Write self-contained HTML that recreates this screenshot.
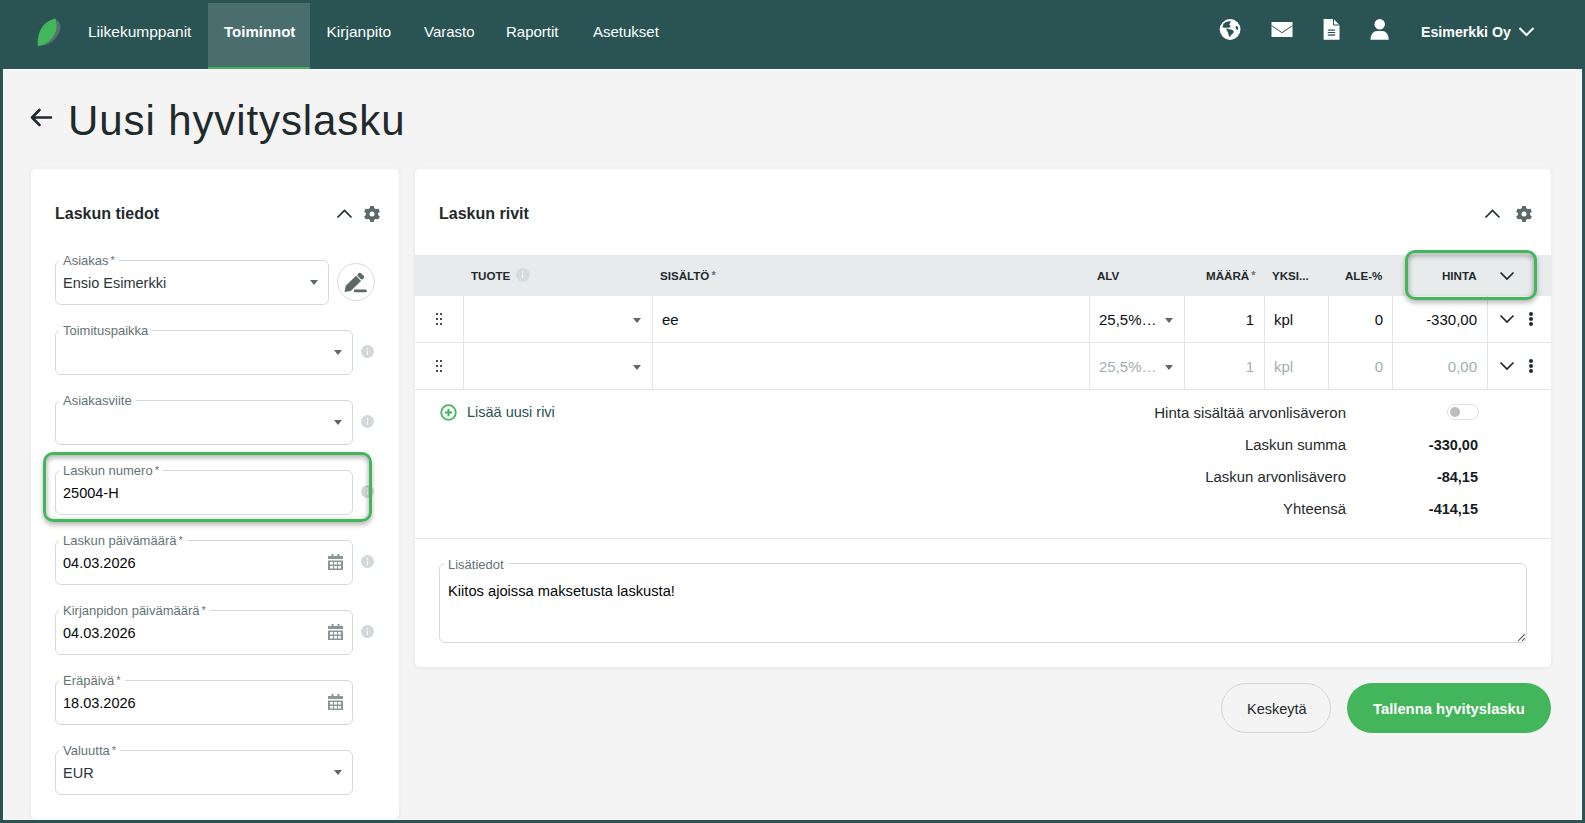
<!DOCTYPE html>
<html><head><meta charset="utf-8">
<style>
*{box-sizing:border-box;margin:0;padding:0}
html,body{width:1585px;height:823px;overflow:hidden}
body{background:#2a5353;font-family:"Liberation Sans",sans-serif;position:relative;color:#1f2a2c}
.a{position:absolute}
.t{position:absolute;white-space:nowrap;line-height:1}
#main{position:absolute;left:3px;top:69px;width:1579px;height:751px;background:#f3f4f3;border:1px solid #fff;border-right:1px solid #fff}
.nav{color:#fff;font-size:15px}
.tab{position:absolute;left:208px;top:3px;width:102px;height:66px;background:#4a6e6e;border-bottom:2px solid #3fb356}
.card{position:absolute;background:#fff;border-radius:5px;box-shadow:0 1px 4px rgba(40,80,100,.08)}
.fld{position:absolute;border:1px solid #d3dada;border-radius:6px;background:#fff}
.lbl{position:absolute;font-size:13px;color:#637376;background:#fff;padding:0 4px;line-height:1;white-space:nowrap}
.val{position:absolute;font-size:14.5px;color:#050808;line-height:1;white-space:nowrap}
.dd{position:absolute;width:0;height:0;border-left:4px solid transparent;border-right:4px solid transparent;border-top:5px solid #5d6868}
.info{position:absolute;width:13px;height:13px;border-radius:50%;background:#d3d9da}
.info:after{content:"";position:absolute;left:5.75px;top:5.5px;width:1.5px;height:4px;background:rgba(255,255,255,.85)}
.info:before{content:"";position:absolute;left:5.75px;top:3px;width:1.5px;height:1.5px;background:rgba(255,255,255,.85)}
.th{position:absolute;font-size:11.6px;font-weight:bold;color:#1f2a2c;line-height:1;white-space:nowrap;top:270.3px}
.vl{position:absolute;width:1px;background:#e2e6e6}
.hl{position:absolute;height:1px;background:#e2e6e6}
.cell{position:absolute;font-size:15px;line-height:1;white-space:nowrap;color:#0b1012}
.g{color:#a3aeb0}
.star{margin-left:2px;font-size:11px;position:relative;top:-1px}
.hlbox{position:absolute;border:3px solid #43b55a;border-radius:10px;box-shadow:inset 0 2px 5px 1px rgba(0,0,0,.28),0 3px 5px rgba(0,0,0,.28)}

</style></head>
<body>
<!-- NAV -->
<svg class="a" style="left:34px;top:16px" width="30" height="34" viewBox="0 0 30 34">
  <path d="M22.5 3.5 C27 6 27.5 13 24 19 C20.5 25 14 29 6.5 30.2 C14 26 23 18 22.5 3.5Z" fill="#56706f"/>
  <path d="M21.5 2.5 C11 5 3 13 3.8 30.2 C12 29.5 22 22 22.6 11 C22.8 7.5 22.3 4.5 21.5 2.5Z" fill="#43b55a"/>
</svg>
<div class="tab"></div>
<div class="t nav" style="left:88px;top:24px;font-size:15.5px">Liikekumppanit</div>
<div class="t nav" style="left:224px;top:24px;font-weight:bold">Toiminnot</div>
<div class="t nav" style="left:326.5px;top:24px;font-size:15.5px">Kirjanpito</div>
<div class="t nav" style="left:424px;top:24px">Varasto</div>
<div class="t nav" style="left:506px;top:24px">Raportit</div>
<div class="t nav" style="left:593px;top:24px">Asetukset</div>

<div class="t nav" style="left:1421px;top:24.5px;font-weight:bold;font-size:14.2px">Esimerkki Oy</div>


<!-- nav icons -->
<svg class="a" style="left:1219px;top:18px" width="23" height="23" viewBox="0 0 23 23">
 <circle cx="11.1" cy="11.5" r="10.4" fill="#fff"/>
 <path d="M3.84 9.03 L4.39 6.48 L6.21 4.47 L8.76 3.74 L11.68 3.56 L10.58 5.39 L10.04 6.66 L11.31 7.94 L10.95 9.03 L8.76 9.58 L5.11 9.58 Z" fill="#2a5353" stroke="#2a5353" stroke-width="0.5" stroke-linejoin="round"/>
 <path d="M7.67 10.85 L10.58 11.4 L13.5 12.31 L14.59 13.4 L13.86 15.23 L12.04 16.69 L10.95 18.87 L10.04 17.42 L9.12 14.13 L7.67 11.58 Z" fill="#2a5353" stroke="#2a5353" stroke-width="0.5" stroke-linejoin="round"/>
 <ellipse cx="17.9" cy="9.9" rx="1.1" ry="2.1" transform="rotate(-20 17.9 9.9)" fill="#2a5353"/>
</svg>
<svg class="a" style="left:1271px;top:21px" width="22" height="17" viewBox="0 0 22 17">
 <rect x="0.5" y="1" width="21" height="15" fill="#fff"/>
 <path d="M0.5 4.6 L11 11.7 L21.5 4.6" fill="none" stroke="#2a5353" stroke-width="1"/>
</svg>
<svg class="a" style="left:1323px;top:18px" width="17" height="22" viewBox="0 0 17 22">
 <path d="M0.6 1 H10.5 L16.5 7 V21.7 H0.6 Z" fill="#fff"/>
 <path d="M10.5 1 V7 H16.5" fill="none" stroke="#2a5353" stroke-width="1"/>
 <rect x="4.8" y="11.5" width="7.4" height="1.2" fill="#2a5353"/>
 <rect x="4.8" y="14" width="7.4" height="1.1" fill="#2a5353"/>
 <rect x="4.8" y="16.4" width="7.4" height="1.3" fill="#2a5353"/>
</svg>
<svg class="a" style="left:1370px;top:18px" width="20" height="22" viewBox="0 0 20 22">
 <circle cx="9.7" cy="6.3" r="5.2" fill="#fff"/>
 <path d="M0.5 21.8 C0.5 16 3.8 12.9 6.8 12.9 H12.4 C15.4 12.9 18.7 16 18.7 21.8 Z" fill="#fff"/>
</svg>
<svg class="a" style="left:1518px;top:26px" width="17" height="11" viewBox="0 0 17 11">
 <path d="M1.5 2 L8.5 9 L15.5 2" fill="none" stroke="#fff" stroke-width="2"/>
</svg>

<div id="main"></div>

<!-- TITLE -->
<svg class="a" style="left:29px;top:107px" width="24" height="21" viewBox="0 0 24 21">
  <path d="M22 10.5H3M10.5 3L3 10.5L10.5 18" fill="none" stroke="#1f2a2c" stroke-width="2.6" stroke-linecap="round" stroke-linejoin="round"/>
</svg>
<div class="t" style="left:68px;top:100px;font-size:42px;letter-spacing:0.9px;color:#1f2a2c">Uusi hyvityslasku</div>

<!-- LEFT CARD -->
<div class="card" style="left:31px;top:169px;width:368px;height:650px"></div>
<div class="t" style="left:55px;top:206px;font-size:16px;font-weight:bold;color:#1f2a2c">Laskun tiedot</div>

<div class="fld" style="left:55px;top:260px;width:274px;height:45px"></div>
<div class="lbl" style="left:59px;top:254px">Asiakas<span class="star">*</span></div>
<div class="val" style="left:63px;top:276px;color:#2d3436">Ensio Esimerkki</div>
<div class="dd" style="left:310px;top:280px"></div>
<div class="fld" style="left:55px;top:330px;width:298px;height:45px"></div>
<div class="lbl" style="left:59px;top:324px">Toimituspaikka</div>
<div class="dd" style="left:334px;top:350px"></div>
<div class="info" style="left:361px;top:345px"></div>
<div class="fld" style="left:55px;top:400px;width:298px;height:45px"></div>
<div class="lbl" style="left:59px;top:394px">Asiakasviite</div>
<div class="dd" style="left:334px;top:420px"></div>
<div class="info" style="left:361px;top:415px"></div>
<div class="fld" style="left:55px;top:470px;width:298px;height:45px"></div>
<div class="lbl" style="left:59px;top:464px">Laskun numero<span class="star">*</span></div>
<div class="val" style="left:63px;top:486px">25004-H</div>
<div class="info" style="left:361px;top:485px"></div>
<div class="fld" style="left:55px;top:540px;width:298px;height:45px"></div>
<div class="lbl" style="left:59px;top:534px">Laskun päivämäärä<span class="star">*</span></div>
<div class="val" style="left:63px;top:556px">04.03.2026</div>
<svg class="a" style="left:328px;top:554px" width="15" height="16" viewBox="0 0 15 16"><rect x="3.5" y="0" width="2" height="3" fill="#8c9696"/><rect x="9.5" y="0" width="2" height="3" fill="#8c9696"/><rect x="0" y="2" width="15" height="3" fill="#8c9696"/><path fill-rule="evenodd" fill="#8c9696" d="M0 6.5H15V16H0Z M2 8h3v2.5H2Z M6 8h3v2.5H6Z M10 8h3v2.5h-3Z M2 12h3v2.5H2Z M6 12h3v2.5H6Z M10 12h3v2.5h-3Z"/></svg>
<div class="info" style="left:361px;top:555px"></div>
<div class="fld" style="left:55px;top:610px;width:298px;height:45px"></div>
<div class="lbl" style="left:59px;top:604px">Kirjanpidon päivämäärä<span class="star">*</span></div>
<div class="val" style="left:63px;top:626px">04.03.2026</div>
<svg class="a" style="left:328px;top:624px" width="15" height="16" viewBox="0 0 15 16"><rect x="3.5" y="0" width="2" height="3" fill="#8c9696"/><rect x="9.5" y="0" width="2" height="3" fill="#8c9696"/><rect x="0" y="2" width="15" height="3" fill="#8c9696"/><path fill-rule="evenodd" fill="#8c9696" d="M0 6.5H15V16H0Z M2 8h3v2.5H2Z M6 8h3v2.5H6Z M10 8h3v2.5h-3Z M2 12h3v2.5H2Z M6 12h3v2.5H6Z M10 12h3v2.5h-3Z"/></svg>
<div class="info" style="left:361px;top:625px"></div>
<div class="fld" style="left:55px;top:680px;width:298px;height:45px"></div>
<div class="lbl" style="left:59px;top:674px">Eräpäivä<span class="star">*</span></div>
<div class="val" style="left:63px;top:696px">18.03.2026</div>
<svg class="a" style="left:328px;top:694px" width="15" height="16" viewBox="0 0 15 16"><rect x="3.5" y="0" width="2" height="3" fill="#8c9696"/><rect x="9.5" y="0" width="2" height="3" fill="#8c9696"/><rect x="0" y="2" width="15" height="3" fill="#8c9696"/><path fill-rule="evenodd" fill="#8c9696" d="M0 6.5H15V16H0Z M2 8h3v2.5H2Z M6 8h3v2.5H6Z M10 8h3v2.5h-3Z M2 12h3v2.5H2Z M6 12h3v2.5H6Z M10 12h3v2.5h-3Z"/></svg>
<div class="fld" style="left:55px;top:750px;width:298px;height:45px"></div>
<div class="lbl" style="left:59px;top:744px">Valuutta<span class="star">*</span></div>
<div class="val" style="left:63px;top:766px;color:#2d3436">EUR</div>
<div class="dd" style="left:334px;top:770px"></div>

<!-- left header icons -->
<svg class="a" style="left:336px;top:208px" width="17" height="11" viewBox="0 0 17 11"><path d="M1.5 9.5L8.5 2.5L15.5 9.5" fill="none" stroke="#1f2a2c" stroke-width="1.6"/></svg>
<svg class="a" style="left:363.5px;top:206px" width="16" height="16" viewBox="0 0 16 16" overflow="visible"><path fill="#5d6868" d="M1.7999999999999998,8 a6.2,6.2 0 1,0 12.4,0 a6.2,6.2 0 1,0 -12.4,0Z M10.40,3.00 L9.75,-0.10 L6.25,-0.10 L5.60,3.00Z M4.87,3.42 L1.86,2.43 L0.11,5.47 L2.47,7.58Z M2.47,8.42 L0.11,10.53 L1.86,13.57 L4.87,12.58Z M5.60,13.00 L6.25,16.10 L9.75,16.10 L10.40,13.00Z M11.13,12.58 L14.14,13.57 L15.89,10.53 L13.53,8.42Z M13.53,7.58 L15.89,5.47 L14.14,2.43 L11.13,3.42Z"/><circle cx="8" cy="8" r="2.5" fill="#fff"/></svg>
<!-- pen button -->
<div class="a" style="left:337px;top:263px;width:38px;height:38px;border-radius:50%;border:1px solid #d6dcdc;background:#fff"></div>
<svg class="a" style="left:344px;top:271px" width="24" height="22" viewBox="0 0 24 22"><path d="M0.8 20.8 L2.1 14.4 L12.1 5.0 L16.8 10.05 L6.8 19.7 Z" fill="#5d6868" stroke="#5d6868" stroke-width="0.4" stroke-linejoin="round"/><rect x="13.1" y="2.9" width="7.4" height="4.4" rx="2" transform="rotate(45 16.8 5.1)" fill="#5d6868"/><rect x="9.8" y="18.6" width="13" height="2.6" rx="1.3" fill="#5d6868"/></svg>
<!-- highlight around laskun numero -->
<div class="hlbox" style="left:43px;top:452px;width:329px;height:70px"></div>

<!-- RIGHT CARD -->
<div class="card" style="left:415px;top:169px;width:1136px;height:498px"></div>
<div class="t" style="left:439px;top:206px;font-size:16px;font-weight:bold;color:#1f2a2c">Laskun rivit</div>

<svg class="a" style="left:1484px;top:208px" width="17" height="11" viewBox="0 0 17 11"><path d="M1.5 9.5L8.5 2.5L15.5 9.5" fill="none" stroke="#1f2a2c" stroke-width="1.6"/></svg>
<svg class="a" style="left:1515.5px;top:206px" width="16" height="16" viewBox="0 0 16 16" overflow="visible"><path fill="#5d6868" d="M1.7999999999999998,8 a6.2,6.2 0 1,0 12.4,0 a6.2,6.2 0 1,0 -12.4,0Z M10.40,3.00 L9.75,-0.10 L6.25,-0.10 L5.60,3.00Z M4.87,3.42 L1.86,2.43 L0.11,5.47 L2.47,7.58Z M2.47,8.42 L0.11,10.53 L1.86,13.57 L4.87,12.58Z M5.60,13.00 L6.25,16.10 L9.75,16.10 L10.40,13.00Z M11.13,12.58 L14.14,13.57 L15.89,10.53 L13.53,8.42Z M13.53,7.58 L15.89,5.47 L14.14,2.43 L11.13,3.42Z"/><circle cx="8" cy="8" r="2.5" fill="#fff"/></svg>
<div class="a" style="left:415px;top:255px;width:1136px;height:41px;background:#e8ebec"></div>
<div class="th" style="left:471px">TUOTE</div>
<div class="info" style="left:516px;top:268px;width:14px;height:14px;background:#d6dcdd"></div>
<div class="th" style="left:660px">SISÄLTÖ<span class="star" style="color:#637376">*</span></div>
<div class="th" style="left:1097px">ALV</div>
<div class="th" style="left:1206px">MÄÄRÄ<span class="star" style="color:#637376">*</span></div>
<div class="th" style="left:1272px">YKSI...</div>
<div class="th" style="left:1345px">ALE-%</div>
<div class="th" style="left:1442px">HINTA</div>
<svg class="a" style="left:1499px;top:271px" width="16" height="10" viewBox="0 0 16 10"><path d="M1.5 1.5L8 8L14.5 1.5" fill="none" stroke="#1f2a2c" stroke-width="1.7"/></svg>
<div class="hl" style="left:415px;top:342px;width:1136px"></div>
<div class="vl" style="left:463px;top:296px;height:46px"></div>
<div class="vl" style="left:652px;top:296px;height:46px"></div>
<div class="vl" style="left:1089px;top:296px;height:46px"></div>
<div class="vl" style="left:1184px;top:296px;height:46px"></div>
<div class="vl" style="left:1264px;top:296px;height:46px"></div>
<div class="vl" style="left:1328px;top:296px;height:46px"></div>
<div class="vl" style="left:1392px;top:296px;height:46px"></div>
<div class="vl" style="left:1487px;top:296px;height:46px"></div>
<div class="a" style="left:436px;top:313px;width:2px;height:2px;background:#404b4b"></div>
<div class="a" style="left:436px;top:318px;width:2px;height:2px;background:#404b4b"></div>
<div class="a" style="left:436px;top:323px;width:2px;height:2px;background:#404b4b"></div>
<div class="a" style="left:440px;top:313px;width:2px;height:2px;background:#404b4b"></div>
<div class="a" style="left:440px;top:318px;width:2px;height:2px;background:#404b4b"></div>
<div class="a" style="left:440px;top:323px;width:2px;height:2px;background:#404b4b"></div>
<div class="dd" style="left:633px;top:318px"></div>
<div class="cell" style="left:662px;top:312px">ee</div>
<div class="cell" style="left:1099px;top:312px">25,5%…</div>
<div class="dd" style="left:1165px;top:318px"></div>
<div class="cell" style="right:331px;top:312px">1</div>
<div class="cell" style="left:1274px;top:312px">kpl</div>
<div class="cell" style="right:202px;top:312px">0</div>
<div class="cell" style="right:108px;top:312px">-330,00</div>
<svg class="a" style="left:1499px;top:314px" width="16" height="10" viewBox="0 0 16 10"><path d="M1.5 1.5L8 8L14.5 1.5" fill="none" stroke="#1f2a2c" stroke-width="1.7"/></svg>
<div class="a" style="left:1528.5px;top:312px;width:4px;height:4px;border-radius:50%;background:#1f2a2c"></div>
<div class="a" style="left:1528.5px;top:317px;width:4px;height:4px;border-radius:50%;background:#1f2a2c"></div>
<div class="a" style="left:1528.5px;top:322px;width:4px;height:4px;border-radius:50%;background:#1f2a2c"></div>
<div class="hl" style="left:415px;top:389px;width:1136px"></div>
<div class="vl" style="left:463px;top:343px;height:46px"></div>
<div class="vl" style="left:652px;top:343px;height:46px"></div>
<div class="vl" style="left:1089px;top:343px;height:46px"></div>
<div class="vl" style="left:1184px;top:343px;height:46px"></div>
<div class="vl" style="left:1264px;top:343px;height:46px"></div>
<div class="vl" style="left:1328px;top:343px;height:46px"></div>
<div class="vl" style="left:1392px;top:343px;height:46px"></div>
<div class="vl" style="left:1487px;top:343px;height:46px"></div>
<div class="a" style="left:436px;top:360px;width:2px;height:2px;background:#404b4b"></div>
<div class="a" style="left:436px;top:365px;width:2px;height:2px;background:#404b4b"></div>
<div class="a" style="left:436px;top:370px;width:2px;height:2px;background:#404b4b"></div>
<div class="a" style="left:440px;top:360px;width:2px;height:2px;background:#404b4b"></div>
<div class="a" style="left:440px;top:365px;width:2px;height:2px;background:#404b4b"></div>
<div class="a" style="left:440px;top:370px;width:2px;height:2px;background:#404b4b"></div>
<div class="dd" style="left:633px;top:365px"></div>
<div class="cell g" style="left:1099px;top:359px">25,5%…</div>
<div class="dd" style="left:1165px;top:365px"></div>
<div class="cell g" style="right:331px;top:359px">1</div>
<div class="cell g" style="left:1274px;top:359px">kpl</div>
<div class="cell g" style="right:202px;top:359px">0</div>
<div class="cell g" style="right:108px;top:359px">0,00</div>
<svg class="a" style="left:1499px;top:361px" width="16" height="10" viewBox="0 0 16 10"><path d="M1.5 1.5L8 8L14.5 1.5" fill="none" stroke="#1f2a2c" stroke-width="1.7"/></svg>
<div class="a" style="left:1528.5px;top:359px;width:4px;height:4px;border-radius:50%;background:#1f2a2c"></div>
<div class="a" style="left:1528.5px;top:364px;width:4px;height:4px;border-radius:50%;background:#1f2a2c"></div>
<div class="a" style="left:1528.5px;top:369px;width:4px;height:4px;border-radius:50%;background:#1f2a2c"></div>
<div class="hlbox" style="left:1405px;top:250px;width:132px;height:50px"></div>
<svg class="a" style="left:440px;top:404px" width="17" height="17" viewBox="0 0 17 17"><circle cx="8.5" cy="8.5" r="7.3" fill="none" stroke="#43b55a" stroke-width="1.8"/><path d="M8.5 4.8V12.2M4.8 8.5H12.2" stroke="#43b55a" stroke-width="2"/></svg>
<div class="t" style="left:467px;top:405px;font-size:14.5px;color:#2a5353">Lisää uusi rivi</div>
<div class="t" style="right:239px;top:405px;font-size:15px;color:#1f2a2c">Hinta sisältää arvonlisäveron</div>
<div class="a" style="left:1447px;top:404px;width:32px;height:16px;border-radius:8px;border:1px solid #dde2e2;background:#fff"></div>
<div class="a" style="left:1450px;top:407px;width:10.4px;height:10.4px;border-radius:50%;background:#bcbcbc"></div>
<div class="t" style="right:239px;top:438px;font-size:14.9px;color:#1f2a2c">Laskun summa</div>
<div class="t" style="right:107px;top:438px;font-size:14.5px;font-weight:bold;color:#151c1e">-330,00</div>
<div class="t" style="right:239px;top:470px;font-size:14.9px;color:#1f2a2c">Laskun arvonlisävero</div>
<div class="t" style="right:107px;top:470px;font-size:14.5px;font-weight:bold;color:#151c1e">-84,15</div>
<div class="t" style="right:239px;top:502px;font-size:14.9px;color:#1f2a2c">Yhteensä</div>
<div class="t" style="right:107px;top:502px;font-size:14.5px;font-weight:bold;color:#151c1e">-414,15</div>
<div class="hl" style="left:415px;top:538px;width:1136px"></div>
<div class="fld" style="left:439px;top:563px;width:1088px;height:80px"></div>
<div class="lbl" style="left:444px;top:557.5px;font-size:13px">Lisätiedot</div>
<div class="val" style="left:448px;top:584px;font-size:14.7px">Kiitos ajoissa maksetusta laskusta!</div>
<svg class="a" style="left:1516px;top:632px" width="10" height="10" viewBox="0 0 10 10"><path d="M2.2 8.8L8.8 2.2M6.2 8.8L8.8 6.2" stroke="#555" stroke-width="1.1"/></svg>
<div class="a" style="left:1221px;top:683px;width:110px;height:50px;border-radius:25px;border:1px solid #cfd7d8;background:#f3f4f3"></div>
<div class="t" style="left:1247px;top:702px;font-size:14.5px;color:#1f2a2c">Keskeytä</div>
<div class="a" style="left:1347px;top:683px;width:204px;height:50px;border-radius:25px;background:#43b55a"></div>
<div class="t" style="left:1373px;top:702px;font-size:14.8px;font-weight:bold;color:#fff">Tallenna hyvityslasku</div>
</body></html>
